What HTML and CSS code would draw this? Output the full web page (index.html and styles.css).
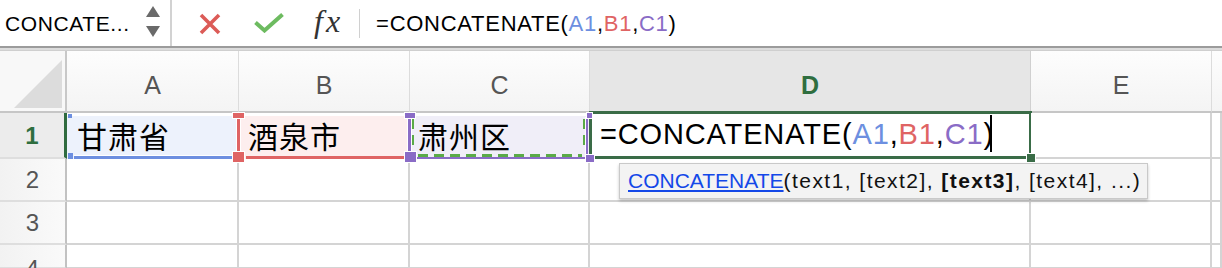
FILE: index.html
```html
<!DOCTYPE html>
<html lang="zh-CN">
<head>
<meta charset="utf-8">
<title>CONCATENATE</title>
<link rel="stylesheet" href="styles.css">
</head>
<body>
<div class="formula-bar">
  <div class="name-box">
    <span class="name-text">CONCATE...</span>
    <svg class="spin" width="16" height="34" viewBox="0 0 16 34"><polygon points="1,11 15,11 8,0" fill="#6a6a6a"/><polygon points="1,20 15,20 8,31" fill="#6a6a6a"/></svg>
  </div>
  <div class="fb-icons">
    <svg class="ic-x" width="22" height="22" viewBox="0 0 22 22"><path d="M2 2 L20 20 M20 2 L2 20" stroke="#dc5b57" stroke-width="3.6" stroke-linecap="butt"/></svg>
    <svg class="ic-ok" width="30" height="20" viewBox="0 0 30 20"><path d="M1.5 9.5 L10.5 17.5 L28.5 1.5" stroke="#6dbb60" stroke-width="4" fill="none"/></svg>
    <span class="ic-fx">fx</span>
  </div>
  <div class="fb-sep"></div>
  <div class="fb-formula">=CONCATENATE(<span class="ra">A1</span>,<span class="rb">B1</span>,<span class="rc">C1</span>)</div>
</div>
<div class="fb-gap"></div>
<div class="sheet">
  <div class="corner"><svg width="67" height="62" viewBox="0 0 67 62"><polygon points="62,9 62,57 14,57" fill="#dcdcdc"/></svg></div>
  <div class="ch">A</div>
  <div class="ch">B</div>
  <div class="ch">C</div>
  <div class="ch ch-active">D</div>
  <div class="ch">E</div>
  <div class="ch ch-last"></div>

  <div class="rh rh-active">1</div>
  <div class="cell ref ref-a">
    <span class="txt cjk">甘肃省</span>
    <i class="sq a-tl"></i><i class="sq a-bl"></i><i class="ln a-b"></i>
  </div>
  <div class="cell ref ref-b">
    <span class="txt cjk">酒泉市</span>
    <i class="ln b-l"></i><i class="sq b-tl"></i><i class="sq b-bl"></i><i class="ln b-b"></i>
  </div>
  <div class="cell ref ref-c">
    <span class="txt cjk">肃州区</span>
    <i class="ln c-l"></i><i class="ln c-r"></i><i class="ln c-b"></i>
    <i class="ants c-ants-l"></i><i class="ants c-ants-r"></i><i class="ants c-ants-b"></i>
    <i class="sq c-tl"></i><i class="sq c-bl"></i><i class="sq c-tr"></i><i class="sq c-br"></i>
  </div>
  <div class="cell active">
    <span class="txt edit">=CONCATENATE(<span class="ra">A1</span>,<span class="rb">B1</span>,<span class="rc">C1</span>)<i class="caret"></i></span>
    <i class="handle"></i>
  </div>
  <div class="cell"></div>
  <div class="cell"></div>

  <div class="rh">2</div>
  <div class="cell"></div><div class="cell"></div><div class="cell"></div><div class="cell"></div><div class="cell"></div><div class="cell"></div>

  <div class="rh">3</div>
  <div class="cell"></div><div class="cell"></div><div class="cell"></div><div class="cell"></div><div class="cell"></div><div class="cell"></div>

  <div class="rh rh-cut">4</div>
  <div class="cell"></div><div class="cell"></div><div class="cell"></div><div class="cell"></div><div class="cell"></div><div class="cell"></div>
</div>
<div class="tooltip"><a class="fn">CONCATENATE</a><span class="args">(text1, [text2], <b>[text3]</b>, [text4], ...)</span></div>
</body>
</html>
```
FILE: styles.css
```css
* { box-sizing: border-box; }
html, body { margin: 0; padding: 0; background: #fff; overflow: hidden; }
body {
  width: 1222px;
  height: 268px;
  font-family: "Liberation Sans", Arial, sans-serif;
  color: #000;
  position: relative;
}

/* formula bar */
.formula-bar {
  display: flex;
  align-items: center;
  height: 48px;
  border-bottom: 2px solid #9c9c9c;
  background: #fff;
}
.name-box {
  width: 172px;
  height: 46px;
  display: flex;
  align-items: center;
  padding-left: 5px;
  border-right: 2px solid #d2d2d2;
}
.name-text {
  font-size: 21px;
  width: 140px;
  letter-spacing: 0.6px;
  margin-top: 1px;
}
.fb-icons {
  display: flex;
  align-items: center;
  height: 46px;
  padding-left: 27px;
}
.ic-x { margin-top: 1px; }
.ic-ok { margin-left: 33px; }
.ic-fx {
  margin-left: 30px;
  font-family: "Liberation Serif", "Times New Roman", serif;
  font-style: italic;
  font-size: 32px;
  color: #333;
  letter-spacing: 3px;
  margin-top: -3px;
}
.fb-sep {
  width: 1px;
  height: 29px;
  background: #d0d0d0;
  margin-left: 16px;
  margin-top: 1px;
}
.fb-formula {
  margin-left: 16px;
  font-size: 22px;
  letter-spacing: 0.72px;
  margin-top: 1px;
}
.ra { color: #6d8fe0; }
.rb { color: #df6464; }
.rc { color: #8a6cc6; }

.fb-gap {
  height: 2px;
  background: #dcdcdc;
}

/* sheet grid */
.sheet {
  display: grid;
  grid-template-columns: 67px 172px 171px 180px 441px 181px 1fr;
  grid-template-rows: 62px 46px 43px 43px 24px;
  border-top: 1px solid #cfcfcf;
}
.corner {
  background: #f8f8f8;
  border-right: 2px solid #c8c8c8;
  border-bottom: 2px solid #c6c6c6;
}
.corner svg { display: block; }
.ch {
  display: flex;
  align-items: center;
  justify-content: center;
  background: linear-gradient(#fdfdfd, #f4f4f4);
  border-right: 1px solid #dcdcdc;
  border-bottom: 2px solid #c6c6c6;
  font-size: 25px;
  color: #555;
  padding-top: 8px;
}
.ch-active {
  background: #e6e6e6;
  color: #2f6e3f;
  font-weight: bold;
  border-right-color: #d0d0d0;
}
.ch-last { border-right: none; }

.rh {
  display: flex;
  align-items: center;
  justify-content: center;
  background: linear-gradient(90deg, #f2f2f2, #fafafa);
  border-right: 2px solid #c2c2c2;
  border-bottom: 2px solid #dedede;
  font-size: 24px;
  color: #555;
  padding-top: 1px;
}
.rh-active {
  background: #ececec;
  color: #2f6e3f;
  border-right: 3px solid #2f6b3f;
  font-weight: bold;
}
.rh-cut { align-items: flex-start; padding-top: 12px; line-height: 1; }

.cell {
  position: relative;
  border-right: 2px solid #d4d4d4;
  border-bottom: 2px solid #d4d4d4;
  background: #fff;
}
.txt {
  position: relative;
  z-index: 2;
  display: block;
  white-space: nowrap;
}
.cjk {
  font-family: "Noto Sans CJK SC", "Noto Sans CJK JP", sans-serif;
  font-size: 30px;
  letter-spacing: 1px;
  line-height: 44px;
  padding-left: 10px;
}
.ref { border-right: none; border-bottom: none; }
.ref-a { background: linear-gradient(#fff 0 3px, #edf2fc 3px); }
.ref-a .cjk { padding-left: 10px; }
.ref-b { background: linear-gradient(#fff 0 3px, #fdeeee 3px); }
.ref-b .cjk { padding-left: 9px; }
.ref-c { background: linear-gradient(#fff 0 3px, #f0eef8 3px); }
.ref-c .cjk { padding-left: 8px; }

.sq, .ln, .ants, .handle { position: absolute; display: block; z-index: 3; }

/* A1 - blue */
.a-tl { left: 1px; top: 1px; width: 4px; height: 4px; background: #6d8fe0; }
.a-bl { left: 1px; top: 40px; width: 5px; height: 6px; background: #6d8fe0; }
.a-b { left: 7px; right: 7px; bottom: 0; height: 3px; background: #6d8fe0; box-shadow: 0 -1px 0 #fff; }

/* B1 - red */
.b-l { left: -2px; top: 4px; bottom: 5px; width: 3px; background: #df6464; box-shadow: -1px 0 0 #fff, 1px 0 0 #fff; }
.b-tl { left: -6px; top: 0; width: 11px; height: 5px; background: #df6464; box-shadow: 0 0 0 1px #fff; }
.b-bl { left: -6px; top: 39px; width: 11px; height: 10px; background: #df6464; box-shadow: 0 0 0 1px #fff; }
.b-b { left: 7px; right: 5px; bottom: 0; height: 3px; background: #df6464; }

/* C1 - purple with marching ants */
.c-l { left: -2px; top: 4px; bottom: 5px; width: 3px; background: #8a6cc6; box-shadow: -1px 0 0 #fff, 1px 0 0 #fff; }
.c-r { right: 2px; top: 4px; bottom: 5px; width: 2px; background: #8a6cc6; box-shadow: -1px 0 0 #fff; }
.c-b { left: 6px; right: 4px; bottom: 0; height: 2px; background: #8a6cc6; }
.ants { background: repeating-linear-gradient(90deg, #5aaa48 0 10px, transparent 10px 16px); }
.c-ants-b { left: 8px; right: 8px; bottom: 2px; height: 3px; }
.c-ants-l { left: 2px; top: 6px; bottom: 8px; width: 2px; background: repeating-linear-gradient(180deg, #5aaa48 0 10px, transparent 10px 16px); }
.c-ants-r { right: 5px; top: 6px; bottom: 8px; width: 2px; background: repeating-linear-gradient(180deg, #5aaa48 0 10px, transparent 10px 16px); }
.c-tl { left: -5px; top: 0; width: 10px; height: 5px; background: #8a6cc6; box-shadow: 0 0 0 1px #fff; }
.c-bl { left: -5px; top: 39px; width: 11px; height: 10px; background: #8a6cc6; box-shadow: 0 0 0 1px #fff; }
.c-tr { right: -2px; top: 0; width: 5px; height: 5px; background: #8a6cc6; box-shadow: 0 0 0 1px #fff; }
.c-br { right: -4px; top: 42px; width: 8px; height: 7px; background: #8a6cc6; box-shadow: 0 0 0 1px #fff; }

/* D1 active */
.active {
  border: 3px solid #3a6c47;
  margin-top: -2px;
  margin-left: -1px;
  margin-right: -1px;
}
.edit {
  font-size: 29px;
  line-height: 41px;
  padding-left: 8px;
  letter-spacing: 0.85px;
}
.caret {
  display: inline-block;
  width: 2px;
  height: 37px;
  background: #000;
  vertical-align: -8px;
  margin-left: -4px;
}
.handle {
  right: -6px;
  bottom: -6px;
  width: 8px;
  height: 8px;
  background: #3a6c47;
  box-shadow: 0 0 0 1px #fff;
}

/* tooltip */
.tooltip {
  position: absolute;
  left: 619px;
  top: 163px;
  width: 529px;
  height: 36px;
  background: #f3f3f3;
  border: 1px solid #c9c9c9;
  box-shadow: 0 2px 3px rgba(0,0,0,0.22);
  font-family: "Liberation Sans", Arial, sans-serif;
  font-size: 21px;
  line-height: 34px;
  padding-left: 8px;
  color: #111;
  white-space: nowrap;
  z-index: 10;
}
.fn { color: #1448e8; text-decoration: underline; }
.args { letter-spacing: 1.45px; }
.tooltip b { font-weight: bold; }
```
